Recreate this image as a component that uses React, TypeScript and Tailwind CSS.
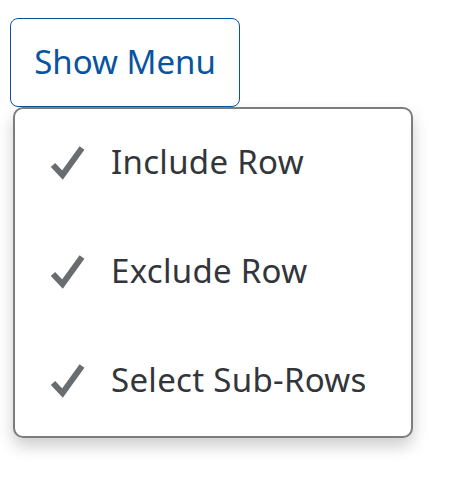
const items = ["Include Row", "Exclude Row", "Select Sub-Rows"];

function Check() {
  return (
    <svg width="36" height="36" viewBox="0 0 36 36" fill="none">
      <path d="M3 21 L12.5 31 L32 4" stroke="#6a6d70" strokeWidth="6" strokeLinecap="butt" strokeLinejoin="miter" />
    </svg>
  );
}

export default function App() {
  return (
    <div className="w-[460px] h-[480px] bg-white p-[10px] pt-[18px] font-['Noto_Sans',sans-serif]">
      <button className="flex h-[89px] w-[230px] items-center justify-center rounded-[8px] border-[1.5px] border-[#0854a0] bg-white pb-[2px] text-[33px] text-[#0854a0]">
        Show Menu
      </button>
      <div className="ml-[3px] w-[400px] rounded-[10px] border-2 border-[#7d7d7d] bg-white shadow-[0_8px_16px_rgba(0,0,0,0.2)]">
        {items.map((label) => (
          <div key={label} className="flex h-[109px] items-center gap-[25px] pb-[4px] pl-[35px]">
            <Check />
            <span className="text-[33px] leading-none tracking-[0.3px] text-[#32363a]">{label}</span>
          </div>
        ))}
      </div>
    </div>
  );
}
